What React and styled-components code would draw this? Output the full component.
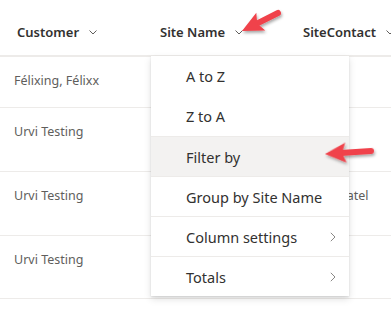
import React from "react";
import styled, { createGlobalStyle } from "styled-components";

const GlobalStyle = createGlobalStyle`
  body {
    margin: 0;
    background: #ffffff;
    font-family: "Noto Sans", "Open Sans", sans-serif;
  }
`;

const columns = ["Customer", "Site Name", "SiteContact"];

const rows = [
  { customer: "Félixing, Félixx", contact: "", height: 51 },
  { customer: "Urvi Testing", contact: "", height: 64 },
  { customer: "Urvi Testing", contact: "Urvi Patel", height: 64 },
  { customer: "Urvi Testing", contact: "", height: 63 },
];

const menuItems = [
  { label: "A to Z" },
  { label: "Z to A" },
  { label: "Filter by", active: true, divider: true },
  { label: "Group by Site Name", divider: true },
  { label: "Column settings", sub: true, divider: true },
  { label: "Totals", sub: true, divider: true },
];

function ChevronDown() {
  return (
    <svg width="8" height="5" viewBox="0 0 8 5">
      <path d="M0.5 0.5 L4 4 L7.5 0.5" fill="none" stroke="#605e5c" strokeWidth="1" />
    </svg>
  );
}

function ChevronRight() {
  return (
    <svg width="6" height="10" viewBox="0 0 6 10">
      <path d="M0.8 0.8 L5 5 L0.8 9.2" fill="none" stroke="#8a8886" strokeWidth="1" />
    </svg>
  );
}

function Arrow({ x1, y1, x2, y2 }) {
  const angle = Math.atan2(y2 - y1, x2 - x1);
  const len = Math.hypot(x2 - x1, y2 - y1);
  return (
    <g transform={`translate(${x1} ${y1}) rotate(${(angle * 180) / Math.PI})`}>
      <line x1="0" y1="0" x2={len - 16} y2="0" stroke="#f0434b" strokeWidth="6" strokeLinecap="round" />
      <path d={`M${len} 0 L${len - 21} -10 L${len - 17} 0 L${len - 21} 10 Z`} fill="#f0434b" />
    </g>
  );
}

export default function App() {
  return (
    <Page>
      <GlobalStyle />
      <Header>
        {columns.map((c) => (
          <HeaderCell key={c}>
            {c}
            <ChevronDown />
          </HeaderCell>
        ))}
      </Header>
      {rows.map((r, i) => (
        <Row key={i} $h={r.height}>
          <Cell>{r.customer}</Cell>
          <Cell />
          <Cell>{r.contact}</Cell>
        </Row>
      ))}

      <Menu>
        {menuItems.map((m) => (
          <MenuItem key={m.label} $active={m.active} $divider={m.divider}>
            <span>{m.label}</span>
            {m.sub && <ChevronRight />}
          </MenuItem>
        ))}
      </Menu>

      <Annotations width="391" height="309">
        <defs>
          <filter id="shadow" x="-20%" y="-50%" width="140%" height="200%">
            <feDropShadow dx="1" dy="2" stdDeviation="1.5" floodColor="#000" floodOpacity="0.35" />
          </filter>
        </defs>
        <g filter="url(#shadow)">
          <Arrow x1={278} y1={13} x2={242} y2={31} />
          <Arrow x1={371} y1={151} x2={325} y2={154} />
        </g>
      </Annotations>
    </Page>
  );
}

const Page = styled.div`
  position: relative;
  width: 391px;
  height: 309px;
  overflow: hidden;
  background: #ffffff;
`;

const Header = styled.div`
  display: grid;
  grid-template-columns: 143px 143px 1fr;
  height: 57px;
  border-bottom: 2px solid #edebe9;
  box-sizing: border-box;
`;

const HeaderCell = styled.div`
  display: flex;
  align-items: center;
  gap: 10px;
  padding: 9px 0 0 17px;
  font-size: 13px;
  font-weight: 600;
  color: #323130;
  white-space: nowrap;
  box-sizing: border-box;
`;

const Row = styled.div`
  display: grid;
  grid-template-columns: 143px 143px 1fr;
  height: ${(p) => p.$h}px;
  border-bottom: 1px solid #edebe9;
  box-sizing: border-box;
`;

const Cell = styled.div`
  padding: 15px 0 0 14px;
  font-size: 12.5px;
  line-height: 18px;
  color: #605e5c;
  white-space: nowrap;
  &:nth-child(3) {
    padding-left: 26px;
  }
`;

const Menu = styled.div`
  position: absolute;
  left: 151px;
  top: 56px;
  width: 198px;
  background: #ffffff;
  box-shadow: 0 3.2px 7.2px rgba(0, 0, 0, 0.13), 0 0.6px 1.8px rgba(0, 0, 0, 0.11);
`;

const MenuItem = styled.div`
  display: flex;
  align-items: center;
  justify-content: space-between;
  height: 40px;
  padding: 0 13px 0 35px;
  box-sizing: border-box;
  font-size: 14.5px;
  color: #323130;
  background: ${(p) => (p.$active ? "#f3f2f1" : "#ffffff")};
  border-top: ${(p) => (p.$divider ? "1px solid #edebe9" : "none")};
`;

const Annotations = styled.svg`
  position: absolute;
  left: 0;
  top: 0;
  pointer-events: none;
`;
